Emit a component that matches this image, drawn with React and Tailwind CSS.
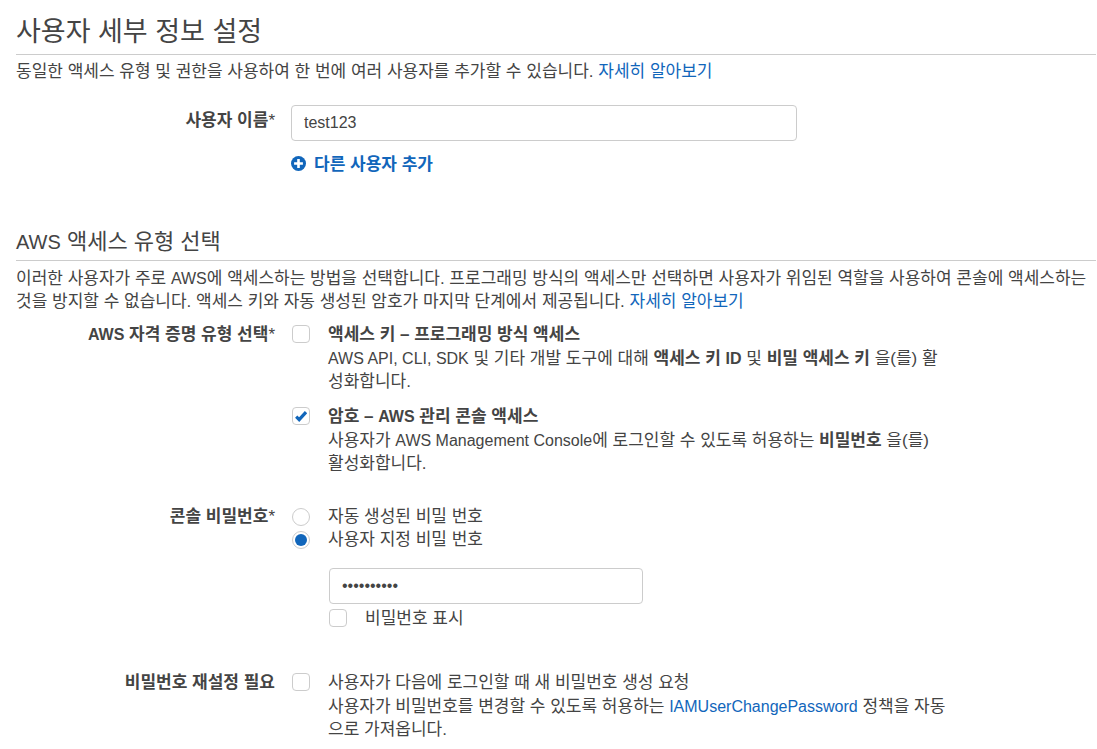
import React, { useState } from "react";

const FONT = "font-['Liberation_Sans','Noto_Sans_CJK_KR',sans-serif]";

// Latin runs are set one step smaller than the Hangul around them.
function En({ children }) {
  return <span className="text-[16px]">{children}</span>;
}

function Star() {
  return <span className="font-normal">*</span>;
}

function Link({ children }) {
  return (
    <a href="#" className="text-[#1166bb] hover:underline">
      {children}
    </a>
  );
}

function FormRow({ label, htmlFor, className, children }) {
  const Label = htmlFor ? "label" : "div";
  return (
    <div className={`grid grid-cols-[259px_minmax(0,1fr)] gap-x-4 ${className}`}>
      <Label htmlFor={htmlFor} className="text-right font-bold">
        {label}
      </Label>
      <div>{children}</div>
    </div>
  );
}

function Checkbox({ id, checked, onChange }) {
  return (
    <span className="grid size-[18px] shrink-0 place-items-center">
      <input
        id={id}
        type="checkbox"
        checked={checked}
        onChange={(e) => onChange(e.target.checked)}
        className="col-start-1 row-start-1 size-[18px] appearance-none rounded-[4px] border border-[#cccccc] bg-white"
      />
      {checked && (
        <svg viewBox="0 0 12 12" className="pointer-events-none col-start-1 row-start-1 size-3" aria-hidden="true">
          <path d="M1.2 6.6 4.2 9.6 11 2.2" fill="none" stroke="#1166bb" strokeWidth="3.2" />
        </svg>
      )}
    </span>
  );
}

function Radio({ id, name, checked, onChange }) {
  return (
    <span className="grid size-[18px] shrink-0 place-items-center">
      <input
        id={id}
        name={name}
        type="radio"
        checked={checked}
        onChange={onChange}
        className="col-start-1 row-start-1 size-[18px] appearance-none rounded-full border border-[#cccccc] bg-white"
      />
      {checked && (
        <span className="pointer-events-none col-start-1 row-start-1 size-3 rounded-full bg-[#1166bb]" />
      )}
    </span>
  );
}

function CheckOption({ id, checked, onChange, title, bold, className = "", children }) {
  return (
    <div className={`flex gap-[18px] pl-px ${className}`}>
      <div className="flex h-[22px] items-center">
        <Checkbox id={id} checked={checked} onChange={onChange} />
      </div>
      <div className="max-w-[619px]">
        <label htmlFor={id} className={`block leading-6 ${bold ? "font-bold" : ""}`}>
          {title}
        </label>
        <p>{children}</p>
      </div>
    </div>
  );
}

export default function App() {
  const [name, setName] = useState("test123");
  const [keyAccess, setKeyAccess] = useState(false);
  const [consoleAccess, setConsoleAccess] = useState(true);
  const [mode, setMode] = useState("custom");
  const [password, setPassword] = useState("abcd123456");
  const [show, setShow] = useState(false);
  const [reset, setReset] = useState(false);

  return (
    <main className={`bg-white pr-px pl-4 text-[17px] leading-[23px] text-[#444444] ${FONT}`}>
      <section>
        <h1 className="border-b border-[#cccccc] pt-[13px] pb-[3px] text-[27px] leading-[38px]">
          사용자 세부 정보 설정
        </h1>
        <p className="mt-[5px]">
          동일한 액세스 유형 및 권한을 사용하여 한 번에 여러 사용자를 추가할 수 있습니다. <Link>자세히 알아보기</Link>
        </p>
        <FormRow
          className="mt-[22px]"
          label={
            <span className="block pt-1">
              사용자 이름
              <Star />
            </span>
          }
          htmlFor="user-name"
        >
          <input
            id="user-name"
            type="text"
            value={name}
            onChange={(e) => setName(e.target.value)}
            className="block h-9 w-full max-w-[506px] rounded-[4px] border border-[#cccccc] bg-white px-3 text-[16px]"
          />
          <button type="button" className="mt-3 flex items-start gap-2 font-bold text-[#1166bb]">
            <svg viewBox="0 0 15 15" className="mt-[3px] size-[15px]" aria-hidden="true">
              <circle cx="7.5" cy="7.5" r="7.5" fill="#1166bb" />
              <path d="M7.5 3.1v8.8M3.1 7.5h8.8" stroke="#ffffff" strokeWidth="2.6" />
            </svg>
            다른 사용자 추가
          </button>
        </FormRow>
      </section>

      <section className="mt-[51px]">
        <h2 className="border-b border-[#cccccc] pb-[3px] text-[22px] leading-[30px]">
          <span className="text-[20px]">AWS</span> 액세스 유형 선택
        </h2>
        <p className="mt-[6px]">
          이러한 사용자가 주로 <En>AWS</En>에 액세스하는 방법을 선택합니다. 프로그래밍 방식의 액세스만 선택하면 사용자가
          위임된 역할을 사용하여 콘솔에 액세스하는 것을 방지할 수 없습니다. 액세스 키와 자동 생성된 암호가 마지막
          단계에서 제공됩니다. <Link>자세히 알아보기</Link>
        </p>

        <FormRow
          className="mt-[10px]"
          label={
            <span className="block leading-6">
              <En>AWS</En> 자격 증명 유형 선택
              <Star />
            </span>
          }
        >
          <CheckOption
            id="access-key"
            bold
            checked={keyAccess}
            onChange={setKeyAccess}
            title="액세스 키 – 프로그래밍 방식 액세스"
          >
            <En>AWS API, CLI, SDK</En> 및 기타 개발 도구에 대해{" "}
            <b>
              액세스 키 <En>ID</En>
            </b>{" "}
            및 <b>비밀 액세스 키</b> 을(를) 활성화합니다.
          </CheckOption>
          <CheckOption
            id="console-access"
            bold
            className="mt-3"
            checked={consoleAccess}
            onChange={setConsoleAccess}
            title={
              <>
                암호 – <En>AWS</En> 관리 콘솔 액세스
              </>
            }
          >
            사용자가 <En>AWS Management Console</En>에 로그인할 수 있도록 허용하는 <b>비밀번호</b> 을(를) 활성화합니다.
          </CheckOption>
        </FormRow>

        <FormRow
          className="mt-[30px]"
          label={
            <>
              콘솔 비밀번호
              <Star />
            </>
          }
        >
          <div className="flex items-center gap-[18px] pl-px">
            <Radio id="pw-auto" name="pw-mode" checked={mode === "auto"} onChange={() => setMode("auto")} />
            <label htmlFor="pw-auto">자동 생성된 비밀 번호</label>
          </div>
          <div className="flex items-center gap-[18px] pl-px">
            <Radio id="pw-custom" name="pw-mode" checked={mode === "custom"} onChange={() => setMode("custom")} />
            <label htmlFor="pw-custom">사용자 지정 비밀 번호</label>
          </div>
          <div className="mt-[17px] pl-[38px]">
            <input
              type={show ? "text" : "password"}
              aria-label="사용자 지정 비밀 번호"
              value={password}
              onChange={(e) => setPassword(e.target.value)}
              className="block h-9 w-full max-w-[314px] rounded-[4px] border border-[#cccccc] bg-white px-3 text-[16px]"
            />
            <div className="mt-[3px] flex gap-[18px]">
              <div className="flex h-[22px] items-center">
                <Checkbox id="pw-show" checked={show} onChange={setShow} />
              </div>
              <label htmlFor="pw-show">비밀번호 표시</label>
            </div>
          </div>
        </FormRow>

        <FormRow className="mt-[41px]" label={<span className="block leading-6">비밀번호 재설정 필요</span>}>
          <CheckOption
            id="pw-reset"
            checked={reset}
            onChange={setReset}
            title="사용자가 다음에 로그인할 때 새 비밀번호 생성 요청"
          >
            사용자가 비밀번호를 변경할 수 있도록 허용하는{" "}
            <Link>
              <En>IAMUserChangePassword</En>
            </Link>{" "}
            정책을 자동으로 가져옵니다.
          </CheckOption>
        </FormRow>
      </section>
    </main>
  );
}
